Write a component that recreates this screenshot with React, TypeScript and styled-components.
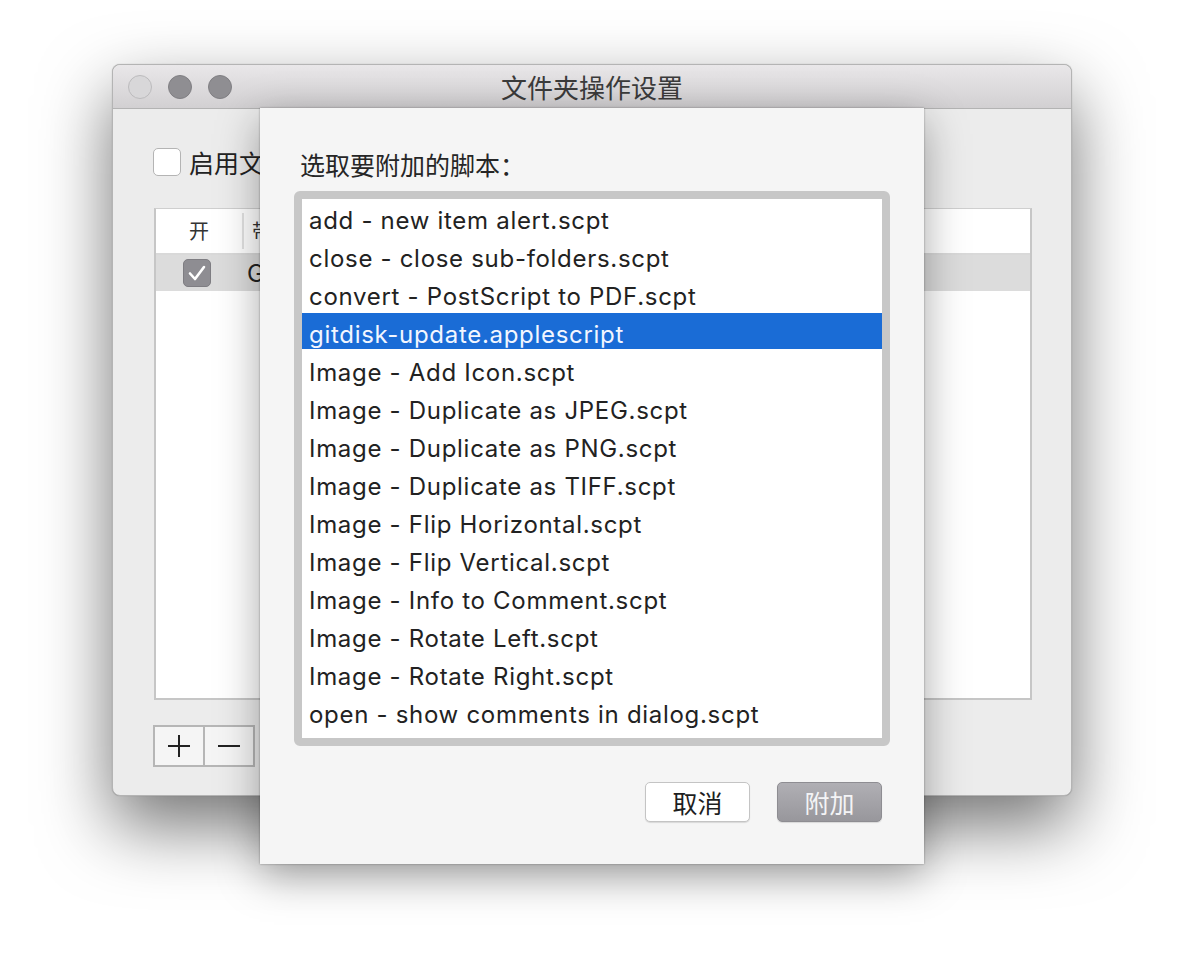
import styled, { createGlobalStyle } from 'styled-components';

const GlobalStyle = createGlobalStyle`
  html, body {
    margin: 0;
    padding: 0;
    background: #ffffff;
  }
  body {
    font-family: Inter, "Noto Sans CJK SC", sans-serif;
    color: #222;
  }
`

const Stage = styled.div`
  width: 1184px;
  height: 956px;
  padding: 64px 0 0 112px;
  box-sizing: border-box;
  overflow: hidden;
`

const Window = styled.div`
  position: relative;
  width: 960px;
  height: 732px;
  box-sizing: border-box;
  border: 1px solid #b4b4b4;
  border-radius: 8px;
  background: #ececec;
  box-shadow: 0 30px 70px rgba(0, 0, 0, 0.55), 0 0 1px rgba(0, 0, 0, 0.3);
  display: flex;
  flex-direction: column;
`

const TitleBar = styled.div`
  height: 43px;
  flex-shrink: 0;
  display: flex;
  align-items: center;
  position: relative;
  padding-left: 15px;
  gap: 16px;
  border-radius: 8px 8px 0 0;
  background: linear-gradient(#e9e7e9, #d2d0d2);
  border-bottom: 1px solid #b3b3b3;
`

const Light = styled.span<{ $first?: boolean }>`
  width: 24px;
  height: 24px;
  border-radius: 50%;
  box-sizing: border-box;
  background: ${p => (p.$first ? '#d8d7d9' : '#8f8e92')};
  border: 1px solid ${p => (p.$first ? '#bcbbbd' : '#807f83')};
`

const Title = styled.div`
  position: absolute;
  left: 0;
  right: 0;
  text-align: center;
  font-family: "Noto Sans CJK SC", sans-serif;
  font-size: 26px;
  color: #3b3b3b;
  pointer-events: none;
`

const Body = styled.div`
  flex: 1;
  padding: 39px 40px 0 40px;
  display: flex;
  flex-direction: column;
`

const CheckRow = styled.div`
  height: 28px;
  display: flex;
  align-items: center;
  gap: 8px;
  font-family: "Noto Sans CJK SC", sans-serif;
  font-size: 25px;
  color: #222;
`

const Box = styled.span<{ $checked?: boolean }>`
  width: 28px;
  height: 28px;
  flex-shrink: 0;
  box-sizing: border-box;
  border-radius: 5px;
  display: flex;
  align-items: center;
  justify-content: center;
  background: ${p => (p.$checked ? '#8e8d92' : '#ffffff')};
  border: 1px solid ${p => (p.$checked ? '#7e7d82' : '#b4b4b4')};
`

const Table = styled.div`
  margin-top: 32px;
  margin-left: 1px;
  width: 878px;
  height: 492px;
  box-sizing: border-box;
  background: #fff;
  border: 2px solid #c6c6c6;
  border-top: 1px solid #cfcfcf;
`

const HeaderRow = styled.div`
  height: 44px;
  display: flex;
  align-items: center;
  border-bottom: 2px solid #d9d9d9;
  font-family: "Noto Sans CJK SC", sans-serif;
  font-size: 20px;
  color: #333;
`

const HeaderCell = styled.div<{ $w?: number }>`
  width: ${p => (p.$w ? `${p.$w}px` : 'auto')};
  text-align: center;
  height: 36px;
  line-height: 36px;
  border-right: ${p => (p.$w ? '2px solid #e2e2e2' : 'none')};
  padding-left: ${p => (p.$w ? '0' : '8px')};
`

const DataRow = styled.div`
  height: 36px;
  display: flex;
  align-items: center;
  background: #dcdcdc;
  padding-left: 27px;
  gap: 36px;
  font-size: 24px;
  color: #222;
`

const Controls = styled.div`
  margin-top: 25px;
  display: flex;
  width: 102px;
  height: 42px;
  box-sizing: border-box;
  border: 2px solid #b6b6b6;
  background: #f5f5f5;
`

const CtrlBtn = styled.div<{ $sep?: boolean }>`
  flex: 1;
  display: flex;
  align-items: center;
  justify-content: center;
  border-left: ${p => (p.$sep ? '2px solid #b6b6b6' : 'none')};
`

const Sheet = styled.div`
  position: absolute;
  left: 147px;
  top: 43px;
  width: 664px;
  height: 756px;
  box-sizing: border-box;
  background: #f5f5f5;
  box-shadow: 0 12px 40px rgba(0, 0, 0, 0.35), 0 0 2px rgba(0, 0, 0, 0.35);
  padding: 39px 34px 0 34px;
  display: flex;
  flex-direction: column;
`

const Prompt = styled.div`
  padding-left: 6px;
  height: 34px;
  font-family: "Noto Sans CJK SC", sans-serif;
  font-size: 25px;
  line-height: 34px;
  color: #262626;
`

const ListBox = styled.div`
  margin-top: 10px;
  height: 555px;
  box-sizing: border-box;
  border: 8px solid #c7c7c7;
  border-radius: 6px;
  background: #fff;
  overflow: hidden;
`

const Item = styled.div<{ $selected?: boolean }>`
  height: 36px;
  margin-bottom: 2px;
  padding: 6px 0 0 7px;
  box-sizing: border-box;
  display: flex;
  align-items: center;
  font-size: 24px;
  letter-spacing: 0.7px;
  color: ${p => (p.$selected ? '#f2f6ff' : '#222')};
  background: ${p => (p.$selected ? '#1a6cd6' : 'transparent')};
  white-space: nowrap;
`

const Footer = styled.div`
  margin-top: 36px;
  display: flex;
  justify-content: flex-end;
  gap: 27px;
  padding-right: 8px;
`

const Button = styled.div<{ $primary?: boolean }>`
  width: 105px;
  height: 40px;
  box-sizing: border-box;
  border-radius: 5px;
  display: flex;
  align-items: center;
  justify-content: center;
  font-family: "Noto Sans CJK SC", sans-serif;
  font-size: 25px;
  color: ${p => (p.$primary ? '#f4f4f6' : '#1e1e1e')};
  background: ${p => (p.$primary ? 'linear-gradient(#b0afb4, #98979c)' : '#ffffff')};
  border: 1px solid ${p => (p.$primary ? '#8e8d92' : '#c4c4c4')};
  box-shadow: 0 1px 1px rgba(0, 0, 0, 0.12);
`

const scripts = [
  'add - new item alert.scpt',
  'close - close sub-folders.scpt',
  'convert - PostScript to PDF.scpt',
  'gitdisk-update.applescript',
  'Image - Add Icon.scpt',
  'Image - Duplicate as JPEG.scpt',
  'Image - Duplicate as PNG.scpt',
  'Image - Duplicate as TIFF.scpt',
  'Image - Flip Horizontal.scpt',
  'Image - Flip Vertical.scpt',
  'Image - Info to Comment.scpt',
  'Image - Rotate Left.scpt',
  'Image - Rotate Right.scpt',
  'open - show comments in dialog.scpt',
];

const Check = () => (
  <svg width="20" height="18" viewBox="0 0 20 18">
    <polyline points="3,9.5 8,15 17,3" fill="none" stroke="#fff" strokeWidth="2.6" strokeLinecap="round" strokeLinejoin="round" />
  </svg>
);

export default function App() {
  return (
    <>
      <GlobalStyle />
      <Stage>
        <Window>
          <TitleBar>
            <Light $first />
            <Light />
            <Light />
            <Title>文件夹操作设置</Title>
          </TitleBar>
          <Body>
            <CheckRow>
              <Box />
              <span>启用文件夹操作</span>
            </CheckRow>
            <Table>
              <HeaderRow>
                <HeaderCell $w={86}>开</HeaderCell>
                <HeaderCell>带有操作的文件夹</HeaderCell>
              </HeaderRow>
              <DataRow>
                <Box $checked>
                  <Check />
                </Box>
                <span>GitDisk</span>
              </DataRow>
            </Table>
            <Controls>
              <CtrlBtn>
                <svg width="24" height="24" viewBox="0 0 24 24">
                  <path d="M12 1v22M1 12h22" stroke="#222" strokeWidth="2" />
                </svg>
              </CtrlBtn>
              <CtrlBtn $sep>
                <svg width="24" height="24" viewBox="0 0 24 24">
                  <path d="M1 12h22" stroke="#222" strokeWidth="2" />
                </svg>
              </CtrlBtn>
            </Controls>
          </Body>
          <Sheet>
            <Prompt>选取要附加的脚本：</Prompt>
            <ListBox>
              {scripts.map((s, i) => (
                <Item key={s} $selected={i === 3}>
                  {s}
                </Item>
              ))}
            </ListBox>
            <Footer>
              <Button>取消</Button>
              <Button $primary>附加</Button>
            </Footer>
          </Sheet>
        </Window>
      </Stage>
    </>
  );
}
